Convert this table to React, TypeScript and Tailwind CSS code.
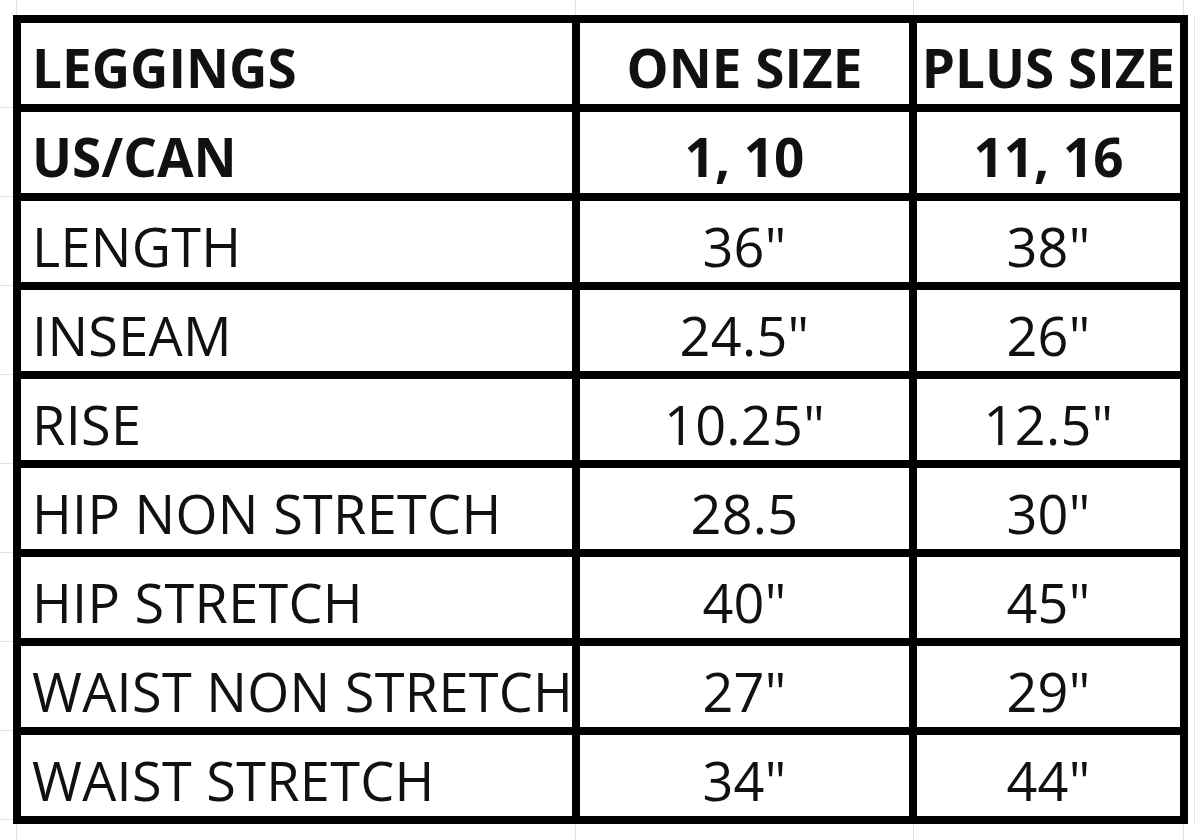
const rows: { label: string; one: string; plus: string; bold?: boolean }[] = [
  { label: "LEGGINGS", one: "ONE SIZE", plus: "PLUS SIZE", bold: true },
  { label: "US/CAN", one: "1, 10", plus: "11, 16", bold: true },
  { label: "LENGTH", one: '36"', plus: '38"' },
  { label: "INSEAM", one: '24.5"', plus: '26"' },
  { label: "RISE", one: '10.25"', plus: '12.5"' },
  { label: "HIP NON STRETCH", one: "28.5", plus: '30"' },
  { label: "HIP STRETCH", one: '40"', plus: '45"' },
  { label: "WAIST NON STRETCH", one: '27"', plus: '29"' },
  { label: "WAIST STRETCH", one: '34"', plus: '44"' },
];

function Cell({ children, bold, left }: { children: string; bold?: boolean; left?: boolean }) {
  return (
    <div
      className={`flex items-center overflow-hidden whitespace-nowrap bg-white pt-[8px] leading-none text-[#111] ${
        left ? "justify-start pl-[11px]" : "justify-center"
      } ${bold ? "text-[53px] font-bold" : "text-[54px] font-normal tracking-[0.3px]"}`}
    >
      {children}
    </div>
  );
}

export default function App() {
  return (
    <div
      className="flex h-[840px] w-[1200px] flex-col overflow-hidden bg-white"
      style={{ fontFamily: '"Open Sans", "Noto Sans", sans-serif' }}
    >
      {/* gridlines above the table */}
      <div className="flex h-[15px] shrink-0 pl-[16px]">
        <div className="w-[559px] border-l border-[#e2e2e2]" />
        <div className="w-[338px] border-l border-[#e2e2e2]" />
        <div className="w-[271px] border-l border-r border-[#e2e2e2]" />
      </div>

      <div className="flex">
        {/* row ticks on the left */}
        <div className="flex w-[13px] shrink-0 flex-col pt-[4px]">
          {rows.map((r) => (
            <div className="h-[89px] border-b border-[#e2e2e2]" key={r.label} />
          ))}
        </div>

        {/* the sheet */}
        <div className="grid auto-rows-[81px] grid-cols-[551px_329px_263px] gap-[8px] bg-black p-[8px]">
          {rows.map((r) => (
            <div className="contents" key={r.label}>
              <Cell bold={r.bold} left>
                {r.label}
              </Cell>
              <Cell bold={r.bold}>{r.one}</Cell>
              <Cell bold={r.bold}>{r.plus}</Cell>
            </div>
          ))}
        </div>

        <div className="ml-[6px] w-px bg-[#e6e6e6]" />
      </div>

      {/* gridlines below the table */}
      <div className="flex flex-1 pl-[16px]">
        <div className="w-[559px] border-l border-[#e2e2e2]" />
        <div className="w-[338px] border-l border-[#e2e2e2]" />
        <div className="w-[271px] border-l border-r border-[#e2e2e2]" />
      </div>
    </div>
  );
}
